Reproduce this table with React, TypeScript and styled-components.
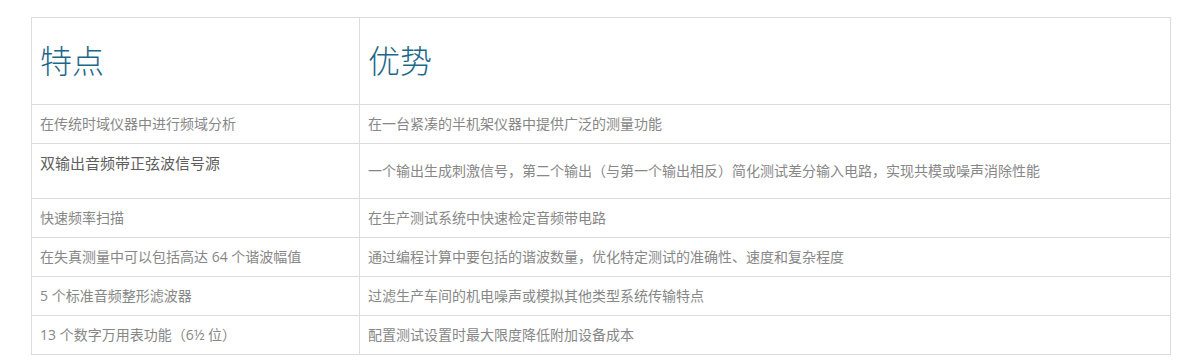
import React from "react";
import styled, { createGlobalStyle } from "styled-components";

const Global = createGlobalStyle`
  html, body { margin: 0; padding: 0; background: #fff; }
  body { font-family: "Open Sans", "Noto Sans CJK SC", sans-serif; }
`;

const Page = styled.div`
  padding: 17px 0 0 31px;
`;

const Table = styled.table`
  width: 1140px;
  border-collapse: collapse;
  table-layout: fixed;
  border: 1px solid #dcdcdc;
`;

const HeadCell = styled.th`
  border: 1px solid #dcdcdc;
  padding: 25px 8px;
  text-align: left;
  vertical-align: middle;
  font-family: "Open Sans", "Noto Sans CJK SC", sans-serif;
  font-weight: 300;
  font-size: 32px;
  line-height: 36px;
  color: #1b6889;
`;

const Cell = styled.td<{ $top?: boolean }>`
  border: 1px solid #dcdcdc;
  padding: 8px;
  vertical-align: ${(p) => (p.$top ? "top" : "middle")};
  font-weight: 400;
  font-size: 14px;
  line-height: 22px;
  color: #878787;
`;

const Lead = styled.p`
  margin: 0 0 16px 0;
  font-size: 15px;
  line-height: 22px;
  color: #5e5e5e;
`;

const rows: { a: string; b: string; lead?: boolean }[] = [
  { a: "在传统时域仪器中进行频域分析", b: "在一台紧凑的半机架仪器中提供广泛的测量功能" },
  {
    a: "双输出音频带正弦波信号源",
    b: "一个输出生成刺激信号，第二个输出（与第一个输出相反）简化测试差分输入电路，实现共模或噪声消除性能",
    lead: true,
  },
  { a: "快速频率扫描", b: "在生产测试系统中快速检定音频带电路" },
  { a: "在失真测量中可以包括高达 64 个谐波幅值", b: "通过编程计算中要包括的谐波数量，优化特定测试的准确性、速度和复杂程度" },
  { a: "5 个标准音频整形滤波器", b: "过滤生产车间的机电噪声或模拟其他类型系统传输特点" },
  { a: "13 个数字万用表功能（6½ 位）", b: "配置测试设置时最大限度降低附加设备成本" },
];

export default function App() {
  return (
    <>
      <Global />
      <Page>
        <Table>
          <colgroup>
            <col style={{ width: 328 }} />
            <col />
          </colgroup>
          <thead>
            <tr>
              <HeadCell>特点</HeadCell>
              <HeadCell>优势</HeadCell>
            </tr>
          </thead>
          <tbody>
            {rows.map((r) => (
              <tr key={r.a}>
                <Cell $top={r.lead}>{r.lead ? <Lead>{r.a}</Lead> : r.a}</Cell>
                <Cell>{r.b}</Cell>
              </tr>
            ))}
          </tbody>
        </Table>
      </Page>
    </>
  );
}
